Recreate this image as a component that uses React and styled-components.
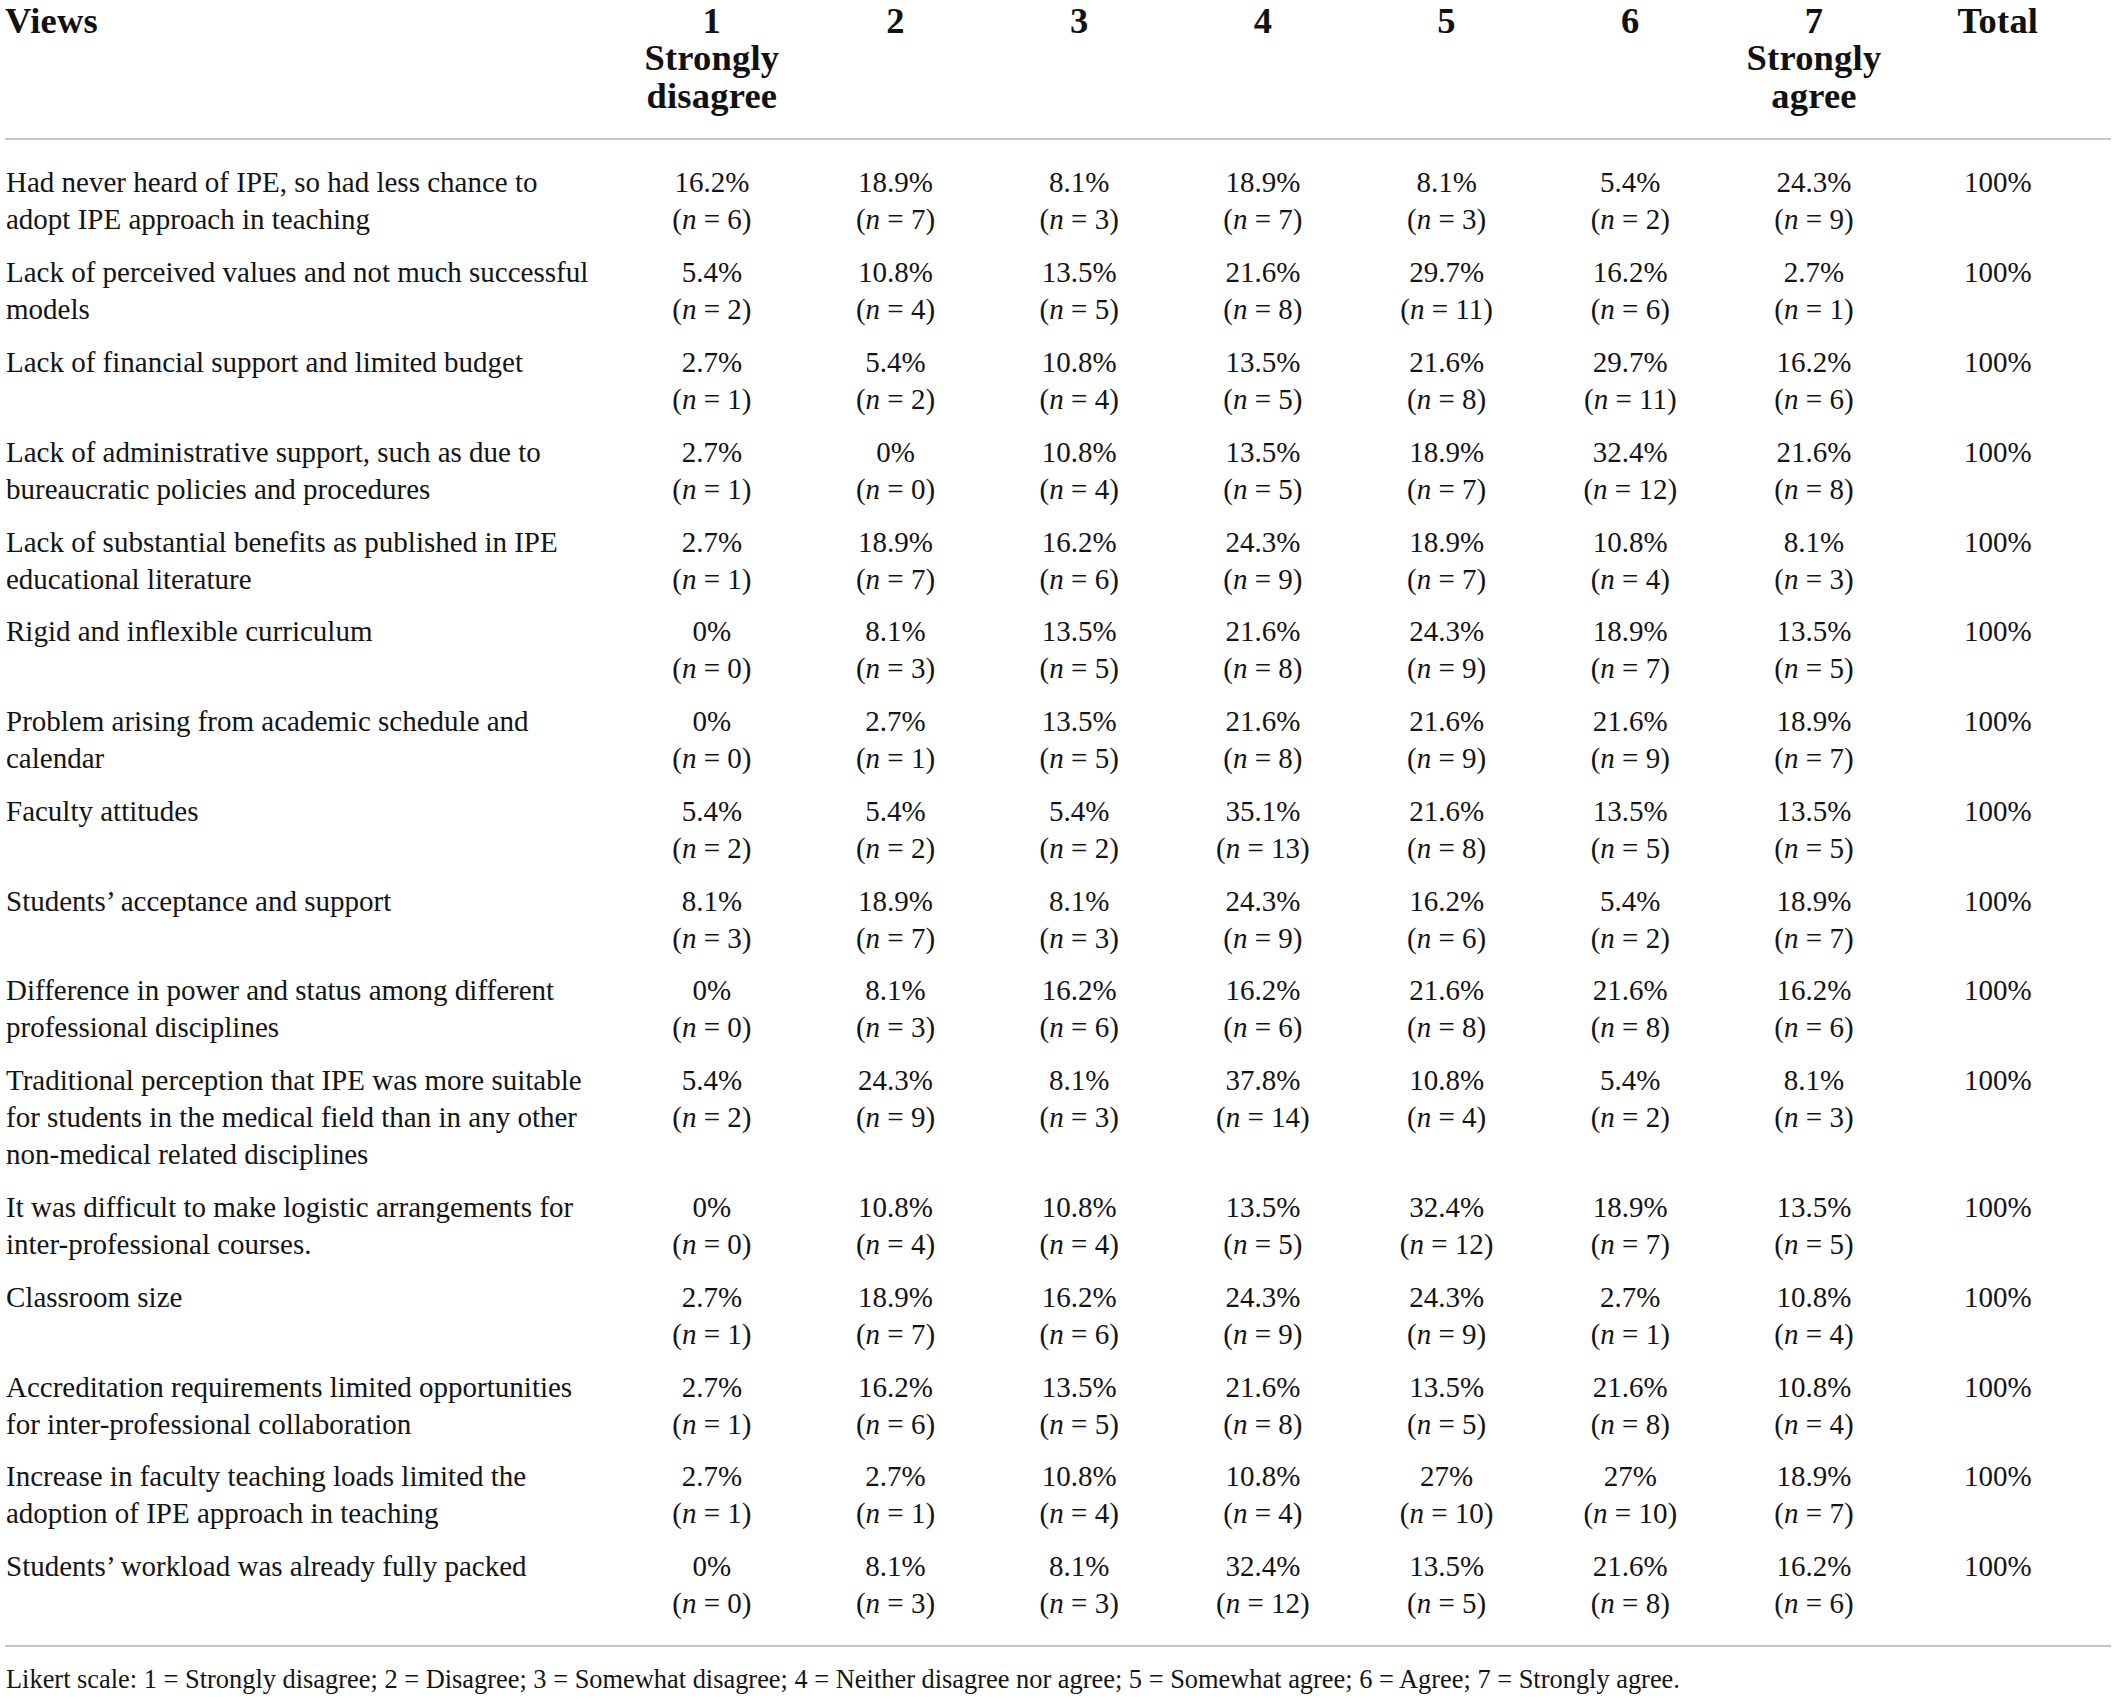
import React from "react";
import styled, { createGlobalStyle } from "styled-components";

const GlobalStyle = createGlobalStyle`
  html, body { margin: 0; padding: 0; background: #ffffff; }
  body { font-family: "Liberation Serif", "Times New Roman", serif; color: #141414; }
`;

const COLS = "615px repeat(7, 183.7px) 204px";

const Page = styled.div`
  width: 2106px;
  margin-left: 5px;
  padding-top: 1.5px;
`;

const HeaderRow = styled.div`
  display: grid;
  grid-template-columns: ${COLS};
  padding-bottom: 23.5px;
  border-bottom: 2px solid #c6c6c6;
`;

const HeadCell = styled.div`
  font-family: "Liberation Serif", "Times New Roman", serif;
  font-weight: 700;
  font-size: 36.5px;
  line-height: 37.5px;
  letter-spacing: 0.2px;
  text-align: ${(p) => (p.$left ? "left" : "center")};
  padding-right: ${(p) => (p.$total ? "20px" : "0")};
  color: #111;
`;

const HeadLine = styled.div`
  white-space: nowrap;
`;

const Body = styled.div`
  padding: 17px 0 15px;
  border-bottom: 2px solid #c6c6c6;
`;

const Row = styled.div`
  display: grid;
  grid-template-columns: ${COLS};
  padding: 7.9px 0;
  font-size: 29px;
  line-height: 37px;
`;

const ViewCell = styled.div`
  text-align: left;
  padding-left: 1px;
`;

const Line = styled.div`
  white-space: nowrap;
`;

const NumCell = styled.div`
  text-align: center;
  padding-right: ${(p) => (p.$total ? "20px" : "0")};
`;

const Italic = styled.i`
  font-style: italic;
`;

const Footnote = styled.div`
  margin-top: 16px;
  font-size: 26.4px;
  line-height: 32px;
  white-space: nowrap;
  padding-left: 1px;
`;

const headers = [
  ["1", "Strongly", "disagree"],
  ["2"],
  ["3"],
  ["4"],
  ["5"],
  ["6"],
  ["7", "Strongly", "agree"],
];

const rows = [
  [["Had never heard of IPE, so had less chance to", "adopt IPE approach in teaching"], [[16.2, 6], [18.9, 7], [8.1, 3], [18.9, 7], [8.1, 3], [5.4, 2], [24.3, 9]]],
  [["Lack of perceived values and not much successful", "models"], [[5.4, 2], [10.8, 4], [13.5, 5], [21.6, 8], [29.7, 11], [16.2, 6], [2.7, 1]]],
  [["Lack of financial support and limited budget"], [[2.7, 1], [5.4, 2], [10.8, 4], [13.5, 5], [21.6, 8], [29.7, 11], [16.2, 6]]],
  [["Lack of administrative support, such as due to", "bureaucratic policies and procedures"], [[2.7, 1], [0, 0], [10.8, 4], [13.5, 5], [18.9, 7], [32.4, 12], [21.6, 8]]],
  [["Lack of substantial benefits as published in IPE", "educational literature"], [[2.7, 1], [18.9, 7], [16.2, 6], [24.3, 9], [18.9, 7], [10.8, 4], [8.1, 3]]],
  [["Rigid and inflexible curriculum"], [[0, 0], [8.1, 3], [13.5, 5], [21.6, 8], [24.3, 9], [18.9, 7], [13.5, 5]]],
  [["Problem arising from academic schedule and", "calendar"], [[0, 0], [2.7, 1], [13.5, 5], [21.6, 8], [21.6, 9], [21.6, 9], [18.9, 7]]],
  [["Faculty attitudes"], [[5.4, 2], [5.4, 2], [5.4, 2], [35.1, 13], [21.6, 8], [13.5, 5], [13.5, 5]]],
  [["Students\u2019 acceptance and support"], [[8.1, 3], [18.9, 7], [8.1, 3], [24.3, 9], [16.2, 6], [5.4, 2], [18.9, 7]]],
  [["Difference in power and status among different", "professional disciplines"], [[0, 0], [8.1, 3], [16.2, 6], [16.2, 6], [21.6, 8], [21.6, 8], [16.2, 6]]],
  [["Traditional perception that IPE was more suitable", "for students in the medical field than in any other", "non-medical related disciplines"], [[5.4, 2], [24.3, 9], [8.1, 3], [37.8, 14], [10.8, 4], [5.4, 2], [8.1, 3]]],
  [["It was difficult to make logistic arrangements for", "inter-professional courses."], [[0, 0], [10.8, 4], [10.8, 4], [13.5, 5], [32.4, 12], [18.9, 7], [13.5, 5]]],
  [["Classroom size"], [[2.7, 1], [18.9, 7], [16.2, 6], [24.3, 9], [24.3, 9], [2.7, 1], [10.8, 4]]],
  [["Accreditation requirements limited opportunities", "for inter-professional collaboration"], [[2.7, 1], [16.2, 6], [13.5, 5], [21.6, 8], [13.5, 5], [21.6, 8], [10.8, 4]]],
  [["Increase in faculty teaching loads limited the", "adoption of IPE approach in teaching"], [[2.7, 1], [2.7, 1], [10.8, 4], [10.8, 4], [27, 10], [27, 10], [18.9, 7]]],
  [["Students\u2019 workload was already fully packed"], [[0, 0], [8.1, 3], [8.1, 3], [32.4, 12], [13.5, 5], [21.6, 8], [16.2, 6]]],
];

export default function App() {
  return (
    <>
      <GlobalStyle />
      <Page>
        <HeaderRow>
          <HeadCell $left>
            <HeadLine>Views</HeadLine>
          </HeadCell>
          {headers.map((lines, i) => (
            <HeadCell key={i}>
              {lines.map((l, j) => (
                <HeadLine key={j}>{l}</HeadLine>
              ))}
            </HeadCell>
          ))}
          <HeadCell $total>
            <HeadLine>Total</HeadLine>
          </HeadCell>
        </HeaderRow>
        <Body>
          {rows.map(([view, vals], i) => (
            <Row key={i}>
              <ViewCell>
                {view.map((l, j) => (
                  <Line key={j}>{l}</Line>
                ))}
              </ViewCell>
              {vals.map(([pct, n], j) => (
                <NumCell key={j}>
                  <Line>{pct}%</Line>
                  <Line>
                    (<Italic>n</Italic> = {n})
                  </Line>
                </NumCell>
              ))}
              <NumCell $total>
                <Line>100%</Line>
              </NumCell>
            </Row>
          ))}
        </Body>
        <Footnote>
          Likert scale: 1 = Strongly disagree; 2 = Disagree; 3 = Somewhat disagree; 4 = Neither disagree nor agree; 5 = Somewhat agree; 6 = Agree; 7 = Strongly agree.
        </Footnote>
      </Page>
    </>
  );
}
